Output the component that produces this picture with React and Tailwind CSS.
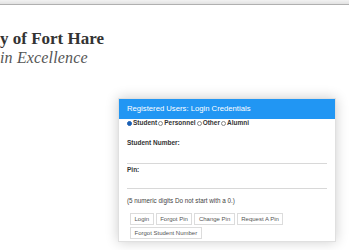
import React from "react";

function Radio({ checked, label }) {
  return (
    <span className="flex items-center">
      {checked ? (
        <span className="w-[5px] h-[5px] rounded-full bg-[#1a5fb4] border border-[#1a5fb4] mr-[1px]" />
      ) : (
        <span className="w-[5px] h-[5px] rounded-full bg-white border border-[#888] mr-[1px]" />
      )}
      <span>{label}</span>
    </span>
  );
}

function Btn({ children }) {
  return (
    <span className="h-[12px] px-[3.5px] flex items-center border border-[#dcdcdc] bg-white text-[#555] text-[6px] leading-none">
      {children}
    </span>
  );
}

export default function App() {
  return (
    <div
      className="w-[349px] h-[250px] bg-white overflow-hidden"
      style={{ fontFamily: '"Liberation Sans", Arial, sans-serif' }}
    >
      <div className="h-[5px] bg-gradient-to-b from-[#f2f2f2] to-[#e2e2e2] border-b border-[#b0b0b0]" />
      <div style={{ fontFamily: '"Liberation Serif", "DejaVu Serif", serif' }}>
        <div className="mt-[25px] flex">
          <span className="whitespace-nowrap text-[17px] leading-[18px] font-bold text-[#333]">
            y of Fort Hare
          </span>
        </div>
        <div className="mt-[2px] flex">
          <span className="whitespace-nowrap text-[16px] leading-[15px] italic tracking-[0.15px] text-[#555]">
            in Excellence
          </span>
        </div>
      </div>

      <div className="mt-[33px] ml-[118px] w-[218px] border border-[#e0e0e0] bg-white shadow-[0_0_12px_rgba(0,0,0,0.2)]">
        <div className="h-[20px] bg-[#2196f3] px-[8px] flex items-center text-white text-[7.7px] leading-none">
          Registered Users: Login Credentials
        </div>
        <div className="px-[8px] pb-[2px]">
          <div className="h-[8px] flex items-center gap-[1px] text-[6.5px] font-bold text-[#333] leading-none">
            <Radio checked label="Student" />
            <Radio label="Personnel" />
            <Radio label="Other" />
            <Radio label="Alumni" />
          </div>
          <div className="mt-[12px] h-[8px] flex items-center text-[6.5px] font-bold text-[#333] leading-none">
            Student Number:
          </div>
          <div className="h-[17px] border-b border-[#d8d8d8]" />
          <div className="mt-[2px] h-[8px] flex items-center text-[6.5px] font-bold text-[#333] leading-none">
            Pin:
          </div>
          <div className="h-[15px] border-b border-[#d8d8d8]" />
          <div className="mt-[8px] h-[8px] flex items-center text-[6.3px] text-[#444] leading-none">
            (5 numeric digits Do not start with a 0.)
          </div>
          <div className="mt-[8px] ml-[3px] flex flex-wrap gap-x-[2px] gap-y-[2px]">
            <Btn>Login</Btn>
            <Btn>Forgot Pin</Btn>
            <Btn>Change Pin</Btn>
            <Btn>Request A Pin</Btn>
            <Btn>Forgot Student Number</Btn>
          </div>
        </div>
      </div>
    </div>
  );
}
